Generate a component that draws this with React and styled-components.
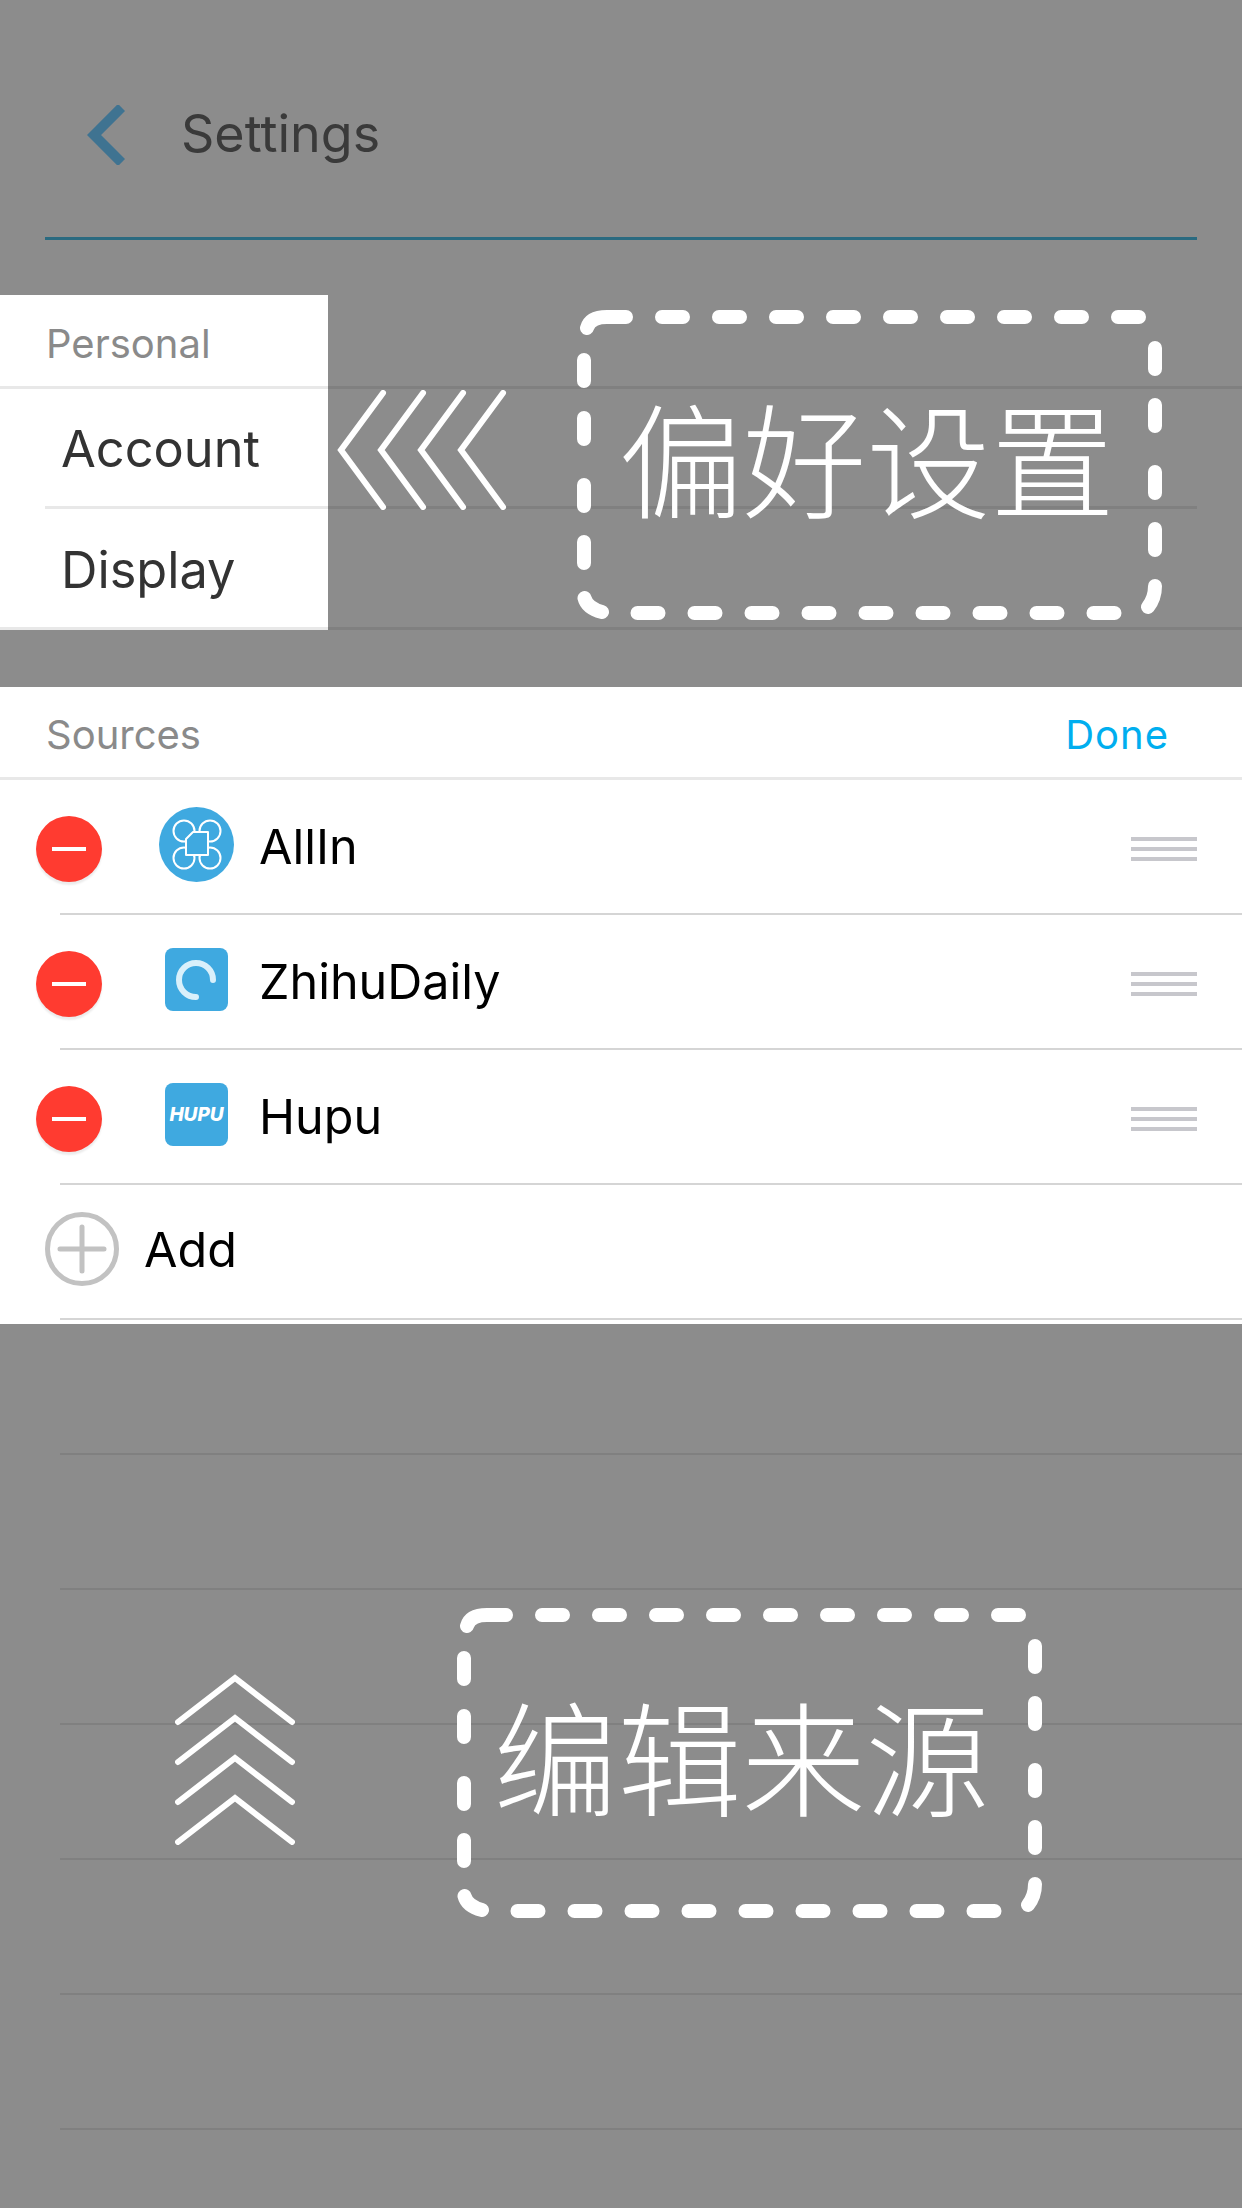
import React from "react";
import styled, { createGlobalStyle } from "styled-components";

const GlobalStyle = createGlobalStyle`
  html, body {
    margin: 0;
    padding: 0;
    background: #8c8c8c;
  }
  * {
    box-sizing: border-box;
  }
`;

const Page = styled.div`
  width: 1242px;
  height: 2208px;
  overflow: hidden;
  background: #8c8c8c;
  font-family: Inter, "Liberation Sans", sans-serif;
`;

const TopBar = styled.header`
  height: 240px;
  margin: 0 45px;
  padding: 33px 0 0 42px;
  display: flex;
  align-items: center;
  gap: 56px;
  border-bottom: 3px solid #2a6a80;
`;

const TopTitle = styled.h1`
  margin: 0 0 3px;
  font-size: 52px;
  font-weight: 400;
  color: #3a3a3a;
`;

const PrefGroup = styled.section`
  position: relative;
  margin-top: 55px;
`;

const PrefRow = styled.div`
  display: grid;
  grid-template-columns: 328px 1fr;
  height: ${({ $height }) => $height}px;
`;

const PrefCell = styled.div`
  flex: 1;
  display: flex;
  align-items: center;
  margin-left: ${({ $inset }) => ($inset ? 45 : 0)}px;
  padding-left: ${({ $pad }) => $pad}px;
  padding-top: ${({ $small }) => ($small ? 5 : 2)}px;
  border-bottom: 3px solid #e8e8e8;
  font-size: ${({ $small }) => ($small ? 40 : 50.5)}px;
  color: ${({ $small }) => ($small ? "#8a8a8a" : "#333")};
`;

const PrefCellWrap = styled.div`
  background: #fff;
  display: flex;
  flex-direction: column;
`;

const PrefTail = styled.div`
  margin-right: ${({ $short }) => ($short ? 45 : 0)}px;
  border-bottom: 3px solid #808080;
`;

const Callout = styled.div`
  position: absolute;
  left: ${({ $left }) => $left}px;
  top: ${({ $top }) => $top}px;
  display: flex;
  align-items: center;
  gap: ${({ $gap }) => $gap}px;
`;

const DashedBox = styled.div`
  position: relative;
  width: 585px;
  height: 310px;
  display: flex;
  align-items: center;
  justify-content: center;
  svg {
    position: absolute;
    inset: 0;
  }
`;

const CalloutText = styled.span`
  margin: 0 ${({ $shift }) => $shift}px 20px 0;
  font-family: "Noto Sans CJK SC", sans-serif;
  font-size: 124px;
  font-weight: 300;
  line-height: 1;
  color: #fff;
`;

const ChevronMark = styled.svg`
  display: block;
  flex: none;
  fill: none;
  stroke: #fff;
  stroke-width: 6;
  stroke-linecap: round;
  margin-bottom: ${({ $lift }) => $lift}px;
`;

const SourcesCard = styled.section`
  position: relative;
  margin-top: 57px;
  height: 637px;
  background: #fff;
`;

const SourcesHeader = styled.div`
  height: 93px;
  padding: 4px 73px 0 46px;
  display: flex;
  align-items: center;
  justify-content: space-between;
  border-bottom: 3px solid #e8e8e8;
  font-size: 40px;
  color: #8a8a8a;
`;

const DoneLabel = styled.span`
  color: #00aeef;
  letter-spacing: 1px;
`;

const SourceRow = styled.div`
  height: 133px;
  display: flex;
  align-items: center;
  padding-left: 36px;
  font-size: 48.5px;
  color: #000;
`;

const RowDivider = styled.div`
  height: 2px;
  margin-left: 60px;
  background: #d5d5d5;
`;

const MinusButton = styled.span`
  flex: none;
  width: 66px;
  height: 66px;
  margin-top: 5px;
  border-radius: 50%;
  background: #ff3b30;
  box-shadow: 0 3px 2px rgba(0, 0, 0, 0.08);
  display: flex;
  align-items: center;
  justify-content: center;
  &::before {
    content: "";
    width: 34px;
    height: 4px;
    background: #fff;
  }
`;

const IconSlot = styled.span`
  flex: none;
  width: 75px;
  margin: -5px 25px 0 57px;
  display: flex;
  justify-content: center;
  svg {
    display: block;
  }
`;

const SquareLogo = styled.span`
  width: 63px;
  height: 63px;
  border-radius: 8px;
  background: #3fa9e0;
  display: flex;
  align-items: center;
  justify-content: center;
`;

const HupuText = styled.span`
  font-size: 19px;
  font-weight: 800;
  font-style: italic;
  color: #fff;
`;

const DragHandle = styled.span`
  flex: none;
  width: 66px;
  margin: 4px 45px 0 auto;
  display: flex;
  flex-direction: column;
  gap: 6px;
  i {
    height: 4px;
    background: #c7c7cc;
  }
`;

const AddRow = styled(SourceRow)`
  padding: 0 0 5px 45px;
  gap: 25px;
`;

const DimList = styled.div`
  position: relative;
`;

const DimRow = styled.div`
  height: 135px;
  margin-left: 60px;
  border-bottom: 2px solid #808080;
  &:first-child {
    height: 131px;
  }
`;

// the dashes are not evenly spaced down the sides, so each one is listed
const topDashes = [0, 1, 2, 3, 4, 5, 6, 7, 8].map((k) => `M${85 + 57 * k} 7H${106 + 57 * k}`);
const bottomDashes = [0, 1, 2, 3, 4, 5, 6, 7, 8].map((k) => `M${60.5 + 57 * k} 303H${81.5 + 57 * k}`);
const rightDashes = [38, 95, 162, 219].map((y) => `M578 ${y}V${y + 21}`);
const leftDashes = [50, 108, 175, 232].map((y) => `M7 ${y}V${y + 21}`);
const cornerDashes = ["M10 18Q13 7 30 7H49", "M578 276Q578 288 571 297", "M7.5 288Q10 298 25 302"];
const dashPath = [...cornerDashes, ...topDashes, ...rightDashes, ...bottomDashes, ...leftDashes].join("");

function RoundedDash() {
  return (
    <svg width="585" height="310" viewBox="0 0 585 310">
      <path d={dashPath} fill="none" stroke="#fff" strokeWidth="14" strokeLinecap="round" />
    </svg>
  );
}

function BackIcon() {
  return (
    <svg width="38" height="60" viewBox="0 0 38 60" fill="none">
      <path d="M31 6 L7 30 L31 54" stroke="#3f7391" strokeWidth="10" strokeLinecap="square" />
    </svg>
  );
}

function AllInLogo() {
  return (
    <svg width="75" height="75" viewBox="0 0 75 75">
      <circle cx="37.5" cy="37.5" r="37.5" fill="#3fa9e0" />
      <g fill="none" stroke="#fff" strokeWidth="2">
        <circle cx="25" cy="24" r="10.5" />
        <circle cx="51" cy="24" r="10.5" />
        <circle cx="25" cy="51" r="10.5" />
        <circle cx="51" cy="51" r="10.5" />
      </g>
      <path d="M34 25 H49 V48 H27 V32 Z" fill="#3fa9e0" stroke="#fff" strokeWidth="2" strokeLinejoin="round" />
    </svg>
  );
}

function ZhihuLogo() {
  return (
    <SquareLogo>
      <svg width="63" height="63" viewBox="0 0 63 63" fill="none">
        <path d="M48 32 A17 17 0 1 0 31 49" stroke="#d9f0fb" strokeWidth="6" strokeLinecap="round" />
      </svg>
    </SquareLogo>
  );
}

function HupuLogo() {
  return (
    <SquareLogo>
      <HupuText>HUPU</HupuText>
    </SquareLogo>
  );
}

function AddIcon() {
  return (
    <svg width="74" height="74" viewBox="0 0 74 74" fill="none" stroke="#c2c2c2" strokeWidth="5" strokeLinecap="round">
      <circle cx="37" cy="37" r="34.5" />
      <path d="M37 15 V59 M15 37 H59" />
    </svg>
  );
}

const sources = [
  { name: "AllIn", logo: <AllInLogo /> },
  { name: "ZhihuDaily", logo: <ZhihuLogo /> },
  { name: "Hupu", logo: <HupuLogo /> },
];

const dimRows = [0, 1, 2, 3, 4, 5];

function App() {
  return (
    <Page>
      <GlobalStyle />
      <TopBar>
        <BackIcon />
        <TopTitle>Settings</TopTitle>
      </TopBar>

      <PrefGroup>
        <PrefRow $height={94}>
          <PrefCellWrap>
            <PrefCell $small $pad={46}>Personal</PrefCell>
          </PrefCellWrap>
          <PrefTail />
        </PrefRow>
        <PrefRow $height={120}>
          <PrefCellWrap>
            <PrefCell $inset $pad={16}>Account</PrefCell>
          </PrefCellWrap>
          <PrefTail $short />
        </PrefRow>
        <PrefRow $height={121}>
          <PrefCellWrap>
            <PrefCell $pad={61}>Display</PrefCell>
          </PrefCellWrap>
          <PrefTail />
        </PrefRow>
        <Callout $left={337} $top={15} $gap={70}>
          <ChevronMark width="170" height="120" viewBox="0 0 170 120" $lift={31}>
            {[0, 40, 80, 120].map((x) => (
              <path key={x} d={`M${x + 46} 3 L${x + 4} 60 L${x + 46} 117`} />
            ))}
          </ChevronMark>
          <DashedBox>
            <RoundedDash />
            <CalloutText $shift={6}>偏好设置</CalloutText>
          </DashedBox>
        </Callout>
      </PrefGroup>

      <SourcesCard>
        <SourcesHeader>
          <span>Sources</span>
          <DoneLabel>Done</DoneLabel>
        </SourcesHeader>
        {sources.map((source) => (
          <React.Fragment key={source.name}>
            <SourceRow>
              <MinusButton />
              <IconSlot>{source.logo}</IconSlot>
              <span>{source.name}</span>
              <DragHandle>
                <i />
                <i />
                <i />
              </DragHandle>
            </SourceRow>
            <RowDivider />
          </React.Fragment>
        ))}
        <AddRow>
          <AddIcon />
          <span>Add</span>
        </AddRow>
        <RowDivider />
      </SourcesCard>

      <DimList>
        {dimRows.map((row) => (
          <DimRow key={row} />
        ))}
        <Callout $left={175} $top={284} $gap={162}>
          <ChevronMark width="120" height="171" viewBox="0 0 120 171" $lift={8}>
            {[0, 40, 80, 120].map((y) => (
              <path key={y} d={`M3 ${y + 48} L60 ${y + 4} L117 ${y + 48}`} />
            ))}
          </ChevronMark>
          <DashedBox>
            <RoundedDash />
            <CalloutText $shift={16}>编辑来源</CalloutText>
          </DashedBox>
        </Callout>
      </DimList>
    </Page>
  );
}

export default App;
